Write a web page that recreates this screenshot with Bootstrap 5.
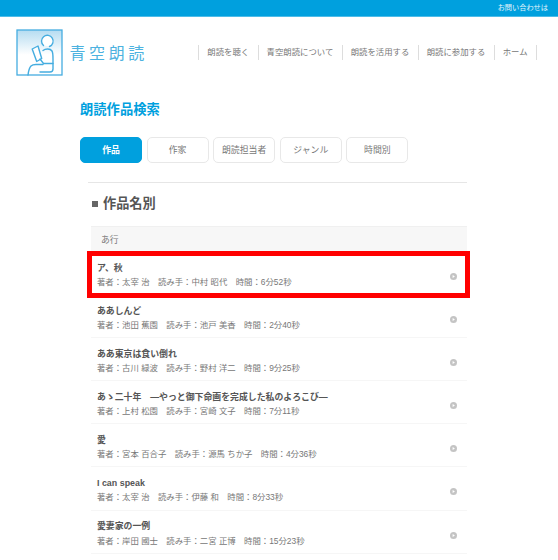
<!DOCTYPE html>
<html lang="ja">
<head>
    <meta charset="UTF-8">
    <meta name="viewport" content="width=device-width, initial-scale=1">
    <title>朗読作品検索</title>
    <link href="https://cdn.jsdelivr.net/npm/bootstrap@5.3.0/dist/css/bootstrap.min.css" rel="stylesheet">
    <style>
        html, body { height: 560px; overflow: hidden; }
        body {
            font-family: "Liberation Sans", "Noto Sans CJK JP", sans-serif;
            color: #666;
            background: #fff;
            font-size: 8.4px;
        }
        .top-strip {
            height: 17px;
            background: #00a0de;
            border-bottom: 1px solid #4dbce8;
            color: #e3f4fb;
            font-size: 7.2px;
            line-height: 16px;
            padding-right: 10px;
            text-align: right;
        }
        .site-head { padding: 12px 21px 0 16px; height: 76px; }
        .logo-text { color: #4db2e0; font-size: 16px; letter-spacing: 3.6px; margin-left: 6.500px; margin-top: 3px; line-height: 1; }
        .head-links { margin-top: 16px; }
        .head-links a {
            color: #777;
            text-decoration: none;
            border-left: 1px solid #ddd;
            padding: 0 8.400px 0 8px;
            line-height: 15px;
            height: 15px;
        }
        .head-links a:last-child { border-right: 1px solid #ddd; }
        .main-wrap { padding-left: 80px; width: 467px; }
        .page-title { color: #00a0de; font-size: 13.3px; font-weight: 700; line-height: 18px; margin: 8px 0 18px; }
        .tab-btn {
            width: 62px;
            height: 26px;
            line-height: 24px;
            font-size: 8.9px;
            text-align: center;
            color: #777;
            border: 1px solid #e8e8e8;
            border-radius: 5px;
            background: #fff;
            text-decoration: none;
        }
        .tab-btn.on-tab { background: #00a0de; border-color: #00a0de; color: #fff; font-weight: 700; }
        .tab-row { gap: 4.6px; }
        .list-area { margin: 19px 0 0 8px; border-top: 1px solid #e6e6e6; }
        .group-title { font-size: 13.2px; font-weight: 700; color: #555; line-height: 18px; padding: 12px 0 0 4px; margin: 0 0 13px; }
        .sq-mark { display: inline-block; width: 6px; height: 6px; background: #666; margin-right: 5px; vertical-align: 1px; }
        .kana-band { margin-left: 3px; background: #f7f7f7; border-top: 1px solid #f0f0f0; height: 26px; line-height: 26px; padding-left: 10px; font-size: 8.8px; color: #777; }
        .work-row {
            position: relative;
            margin-left: 3px;
            height: 43.1px;
            padding: 9.5px 0 0 6px;
            border-bottom: 1px solid #f6f6f6;
        }
        .work-name { font-size: 8.9px; font-weight: 700; color: #555; line-height: 12px; margin-bottom: 2.5px; }
        .work-meta { font-size: 8.4px; color: #777; line-height: 13px; white-space: pre; }
        .go-mark { position: absolute; right: 10.5px; top: 21px; width: 7px; height: 7px; display: block; }
        .work-row.marked::after {
            content: "";
            position: absolute;
            left: -4px;
            top: -1px;
            right: -3px;
            height: 47px;
            border: 5px solid #f00;
        }
    </style>
</head>
<body>

<div class="top-strip">お問い合わせは</div>

<header class="site-head d-flex justify-content-between align-items-start">
    <div class="d-flex align-items-center">
        <svg width="47" height="47" viewBox="0 0 47 47" class="d-block">
            <defs>
                <linearGradient id="logoFade" x1="0" y1="0" x2="0" y2="1">
                    <stop offset="0" stop-color="#b5dcf1"/>
                    <stop offset=".55" stop-color="#fff"/>
                </linearGradient>
            </defs>
            <rect x="1" y="1" width="45" height="45" fill="url(#logoFade)" stroke="#45ade0" stroke-width="1.3"/>
            <g fill="#fff" stroke="#45ade0" stroke-width="1.4" stroke-linejoin="round" stroke-linecap="round">
                <path d="M27.500 16.500a5.800 5.800 0 1 1 6 1"/>
                <path d="M27 21.500c2-1.500 7-2.500 9 .5 1 1.500 1 4 1 8v10c0 2-1 3-3 3H24" fill="none"/>
                <path d="M16.200 20l5.800-3 3.700 12.500-5 3z"/>
                <path d="M24 30l3.500 4.500H37" fill="none"/>
                <path d="M12 46c.5-4 1-7 3-9 1-1 3-1.500 5-1.500h7" fill="none"/>
            </g>
        </svg>
        <div class="logo-text">青空朗読</div>
    </div>
    <nav class="head-links d-flex">
        <a href="#">朗読を聴く</a>
        <a href="#">青空朗読について</a>
        <a href="#">朗読を活用する</a>
        <a href="#">朗読に参加する</a>
        <a href="#">ホーム</a>
    </nav>
</header>

<main class="main-wrap">
    <h1 class="page-title">朗読作品検索</h1>
    <div class="tab-row d-flex">
        <a class="tab-btn on-tab" href="#">作品</a>
        <a class="tab-btn" href="#">作家</a>
        <a class="tab-btn" href="#">朗読担当者</a>
        <a class="tab-btn" href="#">ジャンル</a>
        <a class="tab-btn" href="#">時間別</a>
    </div>

    <section class="list-area">
        <h2 class="group-title"><span class="sq-mark"></span>作品名別</h2>
        <div class="kana-band">あ行</div>
        <div id="works"></div>
    </section>
</main>

<script>
    // rows of the list, all the same shape
    const works = [
        ["ア、秋", "太宰 治", "中村 昭代", "6分52秒"],
        ["ああしんど", "池田 蕉園", "池戸 美香", "2分40秒"],
        ["ああ東京は食い倒れ", "古川 緑波", "野村 洋二", "9分25秒"],
        ["あゝ二十年　—やっと御下命画を完成した私のよろこび—", "上村 松園", "宮崎 文子", "7分11秒"],
        ["愛", "宮本 百合子", "源馬 ちか子", "4分36秒"],
        ["I can speak", "太宰 治", "伊藤 和", "8分33秒"],
        ["愛妻家の一例", "岸田 國士", "二宮 正博", "15分23秒"]
    ];
    const list = document.getElementById("works");
    works.forEach((w, i) => {
        const row = document.createElement("div");
        row.className = "work-row" + (i === 0 ? " marked" : "");
        row.innerHTML = `<div class="work-name">${w[0]}</div>
            <div class="work-meta">著者：${w[1]}　読み手：${w[2]}　時間：${w[3]}</div>
            <svg class="go-mark" viewBox="0 0 7 7"><circle cx="3.500" cy="3.500" r="3.500" fill="#c4c4c4"/><path d="M2.600 1.900l2.300 1.600-2.300 1.600z" fill="#fff"/></svg>`;
        list.appendChild(row);
    });
</script>

<script src="https://cdn.jsdelivr.net/npm/bootstrap@5.3.0/dist/js/bootstrap.bundle.min.js"></script>
</body>
</html>
